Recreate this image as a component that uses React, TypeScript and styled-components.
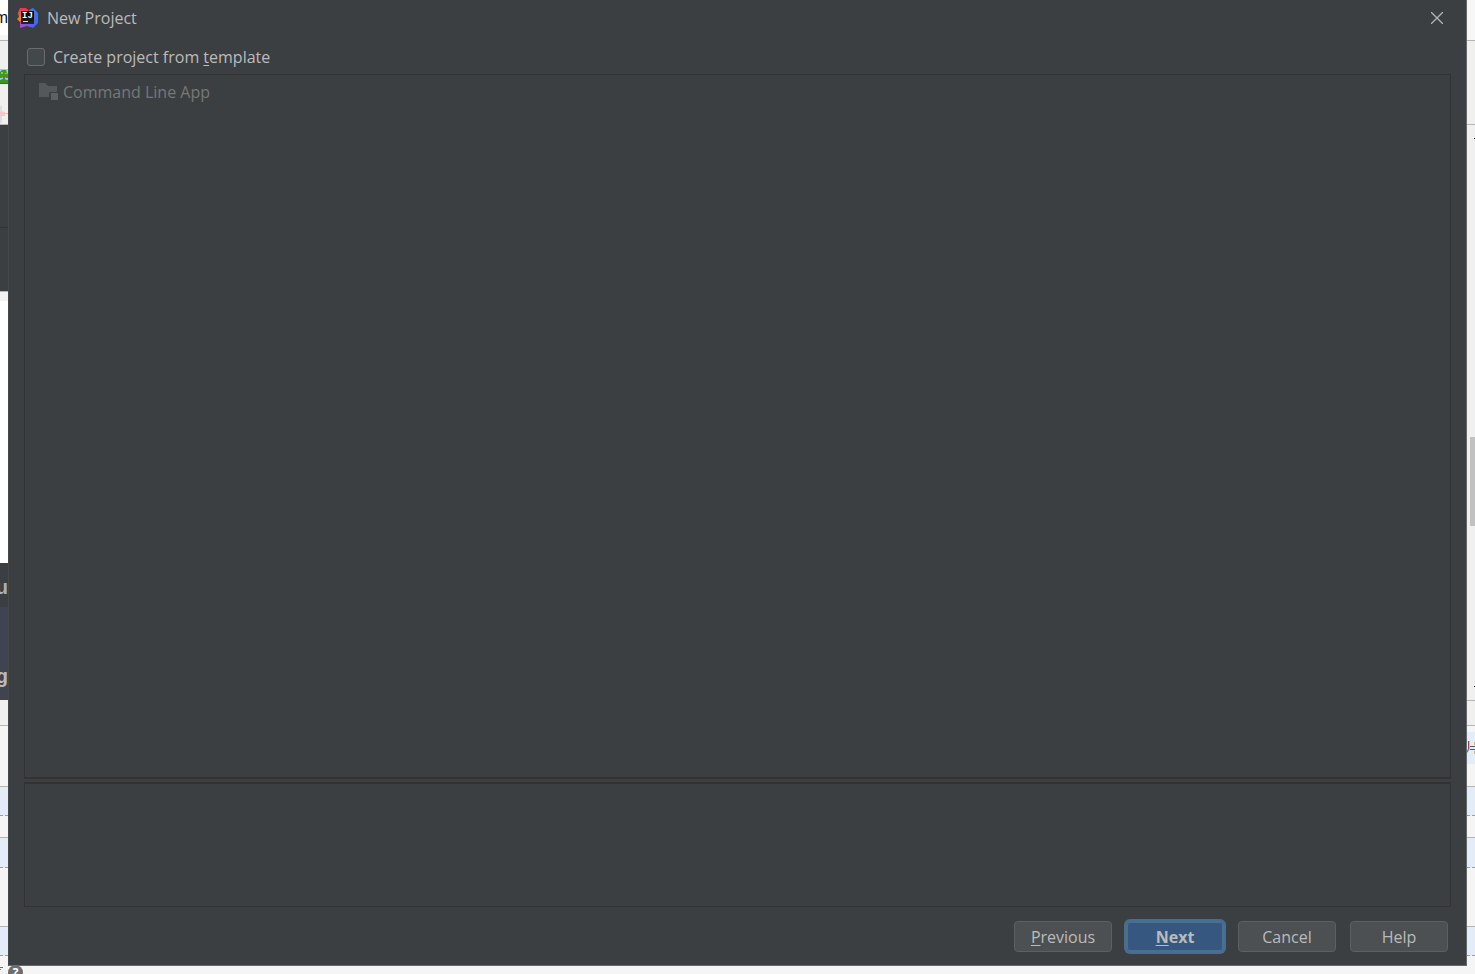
import React from "react";
import styled, { createGlobalStyle, css } from "styled-components";

const GlobalStyle = createGlobalStyle`
  * { box-sizing: border-box; }
  body {
    margin: 0;
    background: #f5f5f5;
    font-family: "Open Sans", "Noto Sans", sans-serif;
    font-size: 16px;
    line-height: 22px;
    color: #bbbbbb;
  }
`;

const Desktop = styled.div`
  display: grid;
  grid-template-columns: 8px minmax(0, 1fr) 8px;
  height: 100vh;
  overflow: hidden;
`;

const Strip = styled.div`
  display: flex;
  flex-direction: column;
  min-width: 0;
  overflow: hidden;
`;

type Line = "solid" | "dashed" | "dark";

const Band = styled.div<{ $h?: number; $bg: string; $line?: Line; $align?: string }>`
  display: flex;
  align-items: ${(p) => p.$align ?? "center"};
  justify-content: flex-end;
  overflow: hidden;
  background: ${(p) => p.$bg};
  ${(p) => (p.$h ? css`flex: 0 0 ${p.$h}px;` : css`flex: 1 0 0;`)}
  ${(p) => p.$line === "solid" && css`border-bottom: 1px solid #b4b4b4;`}
  ${(p) => p.$line === "dashed" && css`border-bottom: 1px dashed #9a9fa6;`}
  ${(p) => p.$line === "dark" && css`border-bottom: 1px solid #313335;`}
`;

const Letter = styled.span<{ $color: string; $bold?: boolean }>`
  color: ${(p) => p.$color};
  font-family: "Liberation Sans", sans-serif;
  font-size: ${(p) => (p.$bold ? 20 : 16)}px;
  font-weight: ${(p) => (p.$bold ? 700 : 400)};
`;

const LetterRow = styled.div<{ $top?: number; $bottom?: number }>`
  padding-top: ${(p) => p.$top ?? 0}px;
  padding-bottom: ${(p) => p.$bottom ?? 0}px;
`;

const Thumb = styled.div`
  flex: none;
  width: 5px;
  height: 89px;
  background: #c1c1c1;
`;

const Tick = styled.div`
  flex: none;
  width: 1px;
  height: 1px;
  background: #222222;
`;

const Center = styled.div`
  display: flex;
  flex-direction: column;
  min-width: 0;
`;

const Dialog = styled.main`
  flex: 1;
  display: flex;
  flex-direction: column;
  min-height: 0;
  padding: 0 15px 13px;
  border: 1px solid #66696b;
  border-top: 0;
  border-left-color: #45484a;
  background: #3c3f41;
`;

const TitleBar = styled.header`
  display: flex;
  align-items: center;
  gap: 8px;
  height: 36px;
  margin: 0 0 0 -7px;
`;

const Title = styled.h1`
  flex: 1;
  margin: 0;
  font-size: 16px;
  font-weight: 400;
`;

const CloseButton = styled.button`
  display: flex;
  padding: 8px;
  border: 0;
  background: none;
  color: #b4b4b4;
`;

const TemplateOption = styled.label`
  display: flex;
  align-items: center;
  gap: 8px;
  height: 38px;
  padding: 3px 0 0 3px;
`;

const CheckBox = styled.input`
  appearance: none;
  width: 18px;
  height: 18px;
  margin: 0;
  border: 1px solid #6b6b6b;
  border-radius: 3px;
  background: #43494a;
`;

const TemplateList = styled.ul`
  flex: 1;
  min-height: 0;
  margin: 0;
  padding: 6px 14px;
  border: 1px solid #323232;
  border-bottom-width: 2px;
  list-style: none;
`;

const TemplateItem = styled.li`
  display: flex;
  align-items: center;
  gap: 5px;
  color: #777777;
`;

const Description = styled.section`
  height: 125px;
  margin-top: 3px;
  border: 1px solid #323232;
  border-top-width: 2px;
`;

const Actions = styled.footer`
  display: flex;
  justify-content: flex-end;
  gap: 14px;
  padding: 14px 3px 0 0;
`;

const Button = styled.button<{ $primary?: boolean }>`
  width: 98px;
  height: 31px;
  padding: 0;
  border: 1px solid #5e6060;
  border-radius: 4px;
  background: #4c5052;
  color: #bbbbbb;
  font: inherit;
  ${(p) =>
    p.$primary &&
    css`
      border-color: #4c708c;
      background: #365880;
      font-weight: 700;
      box-shadow: 0 0 0 2px #466d94, inset 0 0 0 1px #4c708c;
    `}
`;

const Mnemonic = styled.u`
  text-underline-offset: 2px;
  text-decoration-thickness: 1px;
`;

const Below = styled.div`
  display: flex;
  height: 8px;
  background: #f5f5f5;
`;

const HelpLink = styled.a`
  position: relative;
  top: -1px;
  display: block;
  width: 15px;
  height: 15px;
  border-radius: 50%;
  background: #6e6e6e;
  color: #ffffff;
  font-size: 12px;
  font-weight: 700;
  line-height: 15px;
  text-align: center;
  text-decoration: none;
`;

const LogoText = styled.text`
  fill: #ffffff;
  font-family: "Liberation Mono", monospace;
  font-size: 9px;
  font-weight: 700;
`;

const IdeaLogo = () => (
  <svg width="22" height="22" viewBox="0 0 22 22" aria-hidden="true">
    <defs>
      <linearGradient id="warm" x1="0" y1="0" x2="0" y2="1">
        <stop offset="0" stopColor="#fe2857" />
        <stop offset="0.45" stopColor="#fb5a3a" />
        <stop offset="0.6" stopColor="#f97a12" />
        <stop offset="1" stopColor="#f97a12" />
      </linearGradient>
      <linearGradient id="cool" x1="0" y1="0" x2="0" y2="1">
        <stop offset="0" stopColor="#2f7ff0" />
        <stop offset="1" stopColor="#4a5ff0" />
      </linearGradient>
      <linearGradient id="violet" x1="0" y1="0" x2="1" y2="0">
        <stop offset="0" stopColor="#b545d8" />
        <stop offset="1" stopColor="#4a63ee" />
      </linearGradient>
      <linearGradient id="plate" x1="0" y1="0" x2="0" y2="1">
        <stop offset="0" stopColor="#000000" />
        <stop offset="1" stopColor="#262626" />
      </linearGradient>
    </defs>
    <path d="M12 3 16 1l5 5v10l-5 5-4-2z" fill="url(#cool)" />
    <path d="M3 1h6l4 4-4 6-5 5-4-4 2-2-1-4z" fill="url(#warm)" />
    <path d="M3 14h13v4l-3 2-3-1-7 2z" fill="url(#violet)" />
    <path d="M4 4h13v13H4z" fill="url(#plate)" />
    <LogoText x="5" y="11">IJ</LogoText>
    <path d="M6 14h5v1H6z" fill="#d8d8d8" />
  </svg>
);

const FolderIcon = () => (
  <svg width="19" height="18" viewBox="0 0 19 18" aria-hidden="true">
    <path d="M0 0h6l3 3h9v6h-8v5H0z" fill="#55585a" />
    <path d="M12 10h7v7h-7z" fill="#5d6062" />
  </svg>
);

const GameIcon = () => (
  <svg width="8" height="16" viewBox="0 0 8 16" aria-hidden="true">
    <path d="M0 0h8v16H0z" fill="#8fd4ee" />
    <path d="M0 3 2 1h4l1 3 1 1v4H6L4 7 2 9H0z" fill="#3f9a22" />
    <path d="M1 3h2v2H1zM5 4h2v1H5z" fill="#86cf3c" />
    <path d="M3 7h2v5H3z" fill="#8a6a32" />
    <path d="M0 11l3-1 5 1v3H0z" fill="#3f9420" />
    <path d="M0 14h8v1H0z" fill="#4c6a1c" />
    <path d="M0 15h8v1H0z" fill="#d8efe0" />
  </svg>
);

const PlusIcon = () => (
  <svg width="8" height="20" viewBox="0 0 8 20" aria-hidden="true">
    <path d="M0 2h2v5h2v5H2v7H0z" fill="#dcdde2" />
    <path d="M0 8h5v4H0z" fill="#f3c9c9" />
    <path d="M5 9h3v1H5z" fill="#c4c4c6" />
  </svg>
);

const Glyph = () => (
  <svg width="8" height="18" viewBox="0 0 8 18" aria-hidden="true">
    <path d="M2.500 2v8L0 14" fill="none" stroke="#8fd0f0" />
    <path d="M1.500 2v8L0 13" fill="none" stroke="#8a4a58" />
    <path d="M3 7.500h5M3 10.500h5" stroke="#55585c" />
    <path d="M7.500 3v3M7.500 12v3" stroke="#c9b78c" />
  </svg>
);

const CroppedMark = () => (
  <svg width="8" height="8" viewBox="0 0 8 8" aria-hidden="true">
    <path d="M0 1.500h3" stroke="#6a6d70" />
    <path d="M0 3.500h1" stroke="#4a90c8" />
  </svg>
);

const LeftStrip = () => (
  <Strip>
    <Band $h={35} $bg="#ffffff"><Letter $color="#111111">m</Letter></Band>
    <Band $h={6} $bg="#f5f5f5" $line="solid" />
    <Band $h={44} $bg="#f0f0ef" $align="flex-end"><GameIcon /></Band>
    <Band $h={40} $bg="#f0f0ef" $line="solid" $align="flex-end"><PlusIcon /></Band>
    <Band $h={103} $bg="#3c3f41" $line="dark" />
    <Band $h={64} $bg="#3c3f41" $line="solid" />
    <Band $h={9} $bg="#f2f2f2" />
    <Band $h={262} $bg="#ffffff" />
    <Band $h={44} $bg="#3c3f41"><LetterRow $top={4}><Letter $color="#a9b0b6" $bold>u</Letter></LetterRow></Band>
    <Band $h={93} $bg="#3f4450" $align="flex-end"><LetterRow $bottom={12}><Letter $color="#bbbbbb" $bold>g</Letter></LetterRow></Band>
    <Band $h={26} $bg="#f0f0ef" $line="solid" />
    <Band $h={61} $bg="#f5f5f5" $line="solid" />
    <Band $h={29} $bg="#e4ecf7" $line="dashed" />
    <Band $h={22} $bg="#f5f5f5" $line="solid" />
    <Band $h={30} $bg="#e4ecf7" $line="dashed" />
    <Band $h={59} $bg="#f5f5f5" $line="solid" />
    <Band $h={29} $bg="#e4ecf7" $line="dashed" />
    <Band $bg="#f5f5f5" $align="flex-end"><CroppedMark /></Band>
  </Strip>
);

const RightStrip = () => (
  <Strip>
    <Band $h={41} $bg="#f7f7f7" $line="solid" />
    <Band $h={84} $bg="#f0f0ef" $line="solid" />
    <Band $h={27} $bg="#f0f0f0"><Tick /></Band>
    <Band $h={285} $bg="#f0f0f0" />
    <Band $h={89} $bg="#f0f0f0"><Thumb /></Band>
    <Band $h={146} $bg="#f0f0f0" />
    <Band $h={29} $bg="#f0f0f0" $line="solid"><Tick /></Band>
    <Band $h={25} $bg="#f0f0ef" $line="solid" />
    <Band $h={6} $bg="#f5f5f5" />
    <Band $h={32} $bg="#e4ecf7"><Glyph /></Band>
    <Band $h={23} $bg="#f5f5f5" $line="solid" />
    <Band $h={29} $bg="#e4ecf7" $line="dashed" />
    <Band $h={22} $bg="#f5f5f5" $line="solid" />
    <Band $h={30} $bg="#e4ecf7" $line="dashed" />
    <Band $h={59} $bg="#f5f5f5" $line="solid" />
    <Band $h={29} $bg="#e4ecf7" $line="dashed" />
    <Band $bg="#f5f5f5" />
  </Strip>
);

export default function App() {
  return (
    <>
      <GlobalStyle />
      <Desktop>
        <LeftStrip />
        <Center>
          <Dialog>
            <TitleBar>
              <IdeaLogo />
              <Title>New Project</Title>
              <CloseButton type="button" aria-label="Close">
                <svg width="12" height="12" viewBox="0 0 12 12" aria-hidden="true">
                  <path d="M0 0 12 12M12 0 0 12" stroke="currentColor" strokeWidth="1.300" />
                </svg>
              </CloseButton>
            </TitleBar>
            <TemplateOption>
              <CheckBox type="checkbox" />
              <span>Create project from <Mnemonic>t</Mnemonic>emplate</span>
            </TemplateOption>
            <TemplateList>
              <TemplateItem>
                <FolderIcon />
                <span>Command Line App</span>
              </TemplateItem>
            </TemplateList>
            <Description />
            <Actions>
              <Button type="button"><Mnemonic>P</Mnemonic>revious</Button>
              <Button type="button" $primary><Mnemonic>N</Mnemonic>ext</Button>
              <Button type="button">Cancel</Button>
              <Button type="button">Help</Button>
            </Actions>
          </Dialog>
          <Below>
            <HelpLink href="#help">?</HelpLink>
          </Below>
        </Center>
        <RightStrip />
      </Desktop>
    </>
  );
}
